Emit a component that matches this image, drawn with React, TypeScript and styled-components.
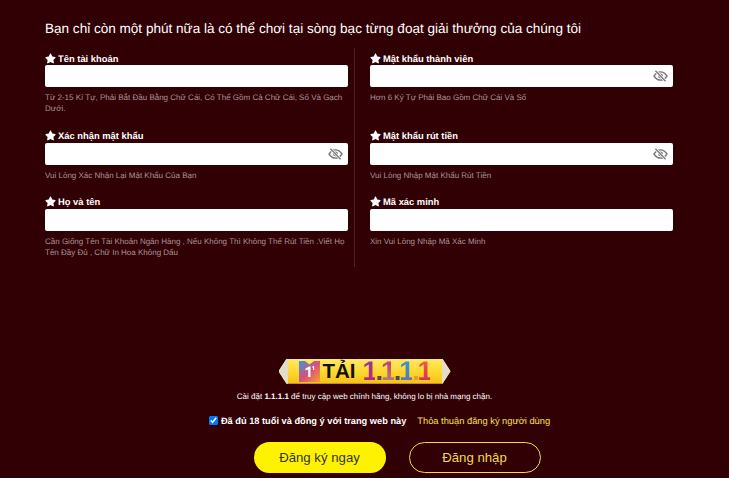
import { createGlobalStyle, styled } from "styled-components";
import { FaStar } from "react-icons/fa";

const GlobalStyle = createGlobalStyle`
  html, body {
    margin: 0;
    padding: 0;
    background: #300005;
    font-family: "Liberation Sans", Arial, sans-serif;
    text-rendering: geometricPrecision;
  }
`;

type FieldData = {
  label: string;
  hint: string;
  secret?: boolean;
};

const leftFields: FieldData[] = [
  {
    label: "Tên tài khoản",
    hint: "Từ 2-15 Kí Tự, Phải Bắt Đầu Bằng Chữ Cái, Có Thể Gồm Cả Chữ Cái, Số Và Gạch Dưới.",
  },
  {
    label: "Xác nhận mật khẩu",
    hint: "Vui Lòng Xác Nhận Lại Mật Khẩu Của Bạn",
    secret: true,
  },
  {
    label: "Họ và tên",
    hint: "Cần Giống Tên Tài Khoản Ngân Hàng , Nếu Không Thì Không Thể Rút Tiền .Viết Họ Tên Đầy Đủ , Chữ In Hoa Không Dấu",
  },
];

const rightFields: FieldData[] = [
  {
    label: "Mật khẩu thành viên",
    hint: "Hơn 6 Ký Tự Phải Bao Gồm Chữ Cái Và Số",
    secret: true,
  },
  {
    label: "Mật khẩu rút tiền",
    hint: "Vui Lòng Nhập Mật Khẩu Rút Tiền",
    secret: true,
  },
  {
    label: "Mã xác minh",
    hint: "Xin Vui Lòng Nhập Mã Xác Minh",
  },
];

const EyeSlash = () => (
  <EyeIcon viewBox="0 0 16 13">
    <path
      d="M1 6.5 C3 3.4 5.4 2 8 2 C10.6 2 13 3.4 15 6.5 C13 9.6 10.6 11 8 11 C5.4 11 3 9.6 1 6.5 Z"
      fill="none"
      stroke="#777"
      strokeWidth="1.5"
    />
    <circle cx="8" cy="6.5" r="2.6" fill="#777" />
    <path d="M2.5 0.8 L13.5 12.2" stroke="#fff" strokeWidth="2.8" />
    <path d="M2.5 0.8 L13.5 12.2" stroke="#777" strokeWidth="1.4" />
  </EyeIcon>
);

const Field = ({ label, hint, secret }: FieldData) => (
  <FieldWrap>
    <Label>
      <FaStar size={11} />
      {label}
    </Label>
    <InputBox>
      <Input type={secret ? "password" : "text"} />
      {secret && <EyeSlash />}
    </InputBox>
    <Hint>{hint}</Hint>
  </FieldWrap>
);

const App = () => {
  return (
    <>
      <GlobalStyle />
      <Page>
        <Title>Bạn chỉ còn một phút nữa là có thể chơi tại sòng bạc từng đoạt giải thưởng của chúng tôi</Title>
        <FormGrid>
          {leftFields.map((f) => (
            <Field key={f.label} {...f} />
          ))}
          <Divider />
          {rightFields.map((f) => (
            <Field key={f.label} {...f} />
          ))}
        </FormGrid>
        <Footer>
          <Banner>
            <BannerLogo viewBox="0 0 21 21">
              <defs>
                <linearGradient id="logoBg" x1="0" y1="0" x2="1" y2="1">
                  <stop offset="0" stopColor="#2f9be0" />
                  <stop offset="0.5" stopColor="#d9507a" />
                  <stop offset="1" stopColor="#f5a030" />
                </linearGradient>
              </defs>
              <path d="M0 0 L6 0 L10.5 3.5 L15 0 L21 0 L21 21 L0 21 Z" fill="url(#logoBg)" />
              <path d="M6.5 7.5 L10 5.5 L11.5 5.5 L11.5 16 L9.2 16 L9.2 8.6 L6.5 9.6 Z" fill="#fff" />
              <path d="M13.8 5 L15.2 5 L15.2 9 L14 9 L14 6.4 L13 6.8 Z" fill="#fff" />
            </BannerLogo>
            <BannerWord>TẢI</BannerWord>
            <BannerNumber>
              <Digit $from="#8f3a9c" $to="#c2286e">1</Digit>
              <Dot>.</Dot>
              <Digit $from="#c0357a" $to="#b08a70">1</Digit>
              <Dot>.</Dot>
              <Digit $from="#30a0c0" $to="#6a6ab8">1</Digit>
              <Dot $color="#e89a30">.</Dot>
              <Digit $from="#f0603a" $to="#d82858">1</Digit>
            </BannerNumber>
          </Banner>
          <Note>
            Cài đặt <b>1.1.1.1</b> để truy cập web chính hãng, không lo bị nhà mạng chặn.
          </Note>
          <AgreeRow>
            <AgreeLabel>
              <AgreeBox type="checkbox" defaultChecked />
              Đã đủ 18 tuổi và đồng ý với trang web này
            </AgreeLabel>
            <AgreeLink>Thỏa thuận đăng ký người dùng</AgreeLink>
          </AgreeRow>
          <ButtonRow>
            <PrimaryButton>Đăng ký ngay</PrimaryButton>
            <OutlineButton>Đăng nhập</OutlineButton>
          </ButtonRow>
        </Footer>
      </Page>
    </>
  );
};

const Page = styled.div`
  width: 729px;
  height: 478px;
  overflow: hidden;
  box-sizing: border-box;
  padding: 20px 0 0 45px;
  background: #300005;
`;

const Title = styled.div`
  color: #fff;
  font-size: 13.55px;
  line-height: 17px;
  white-space: nowrap;
`;

const FormGrid = styled.div`
  display: grid;
  grid-auto-flow: column;
  grid-template-columns: 303px 22px 303px;
  grid-template-rows: auto auto 75px;
  row-gap: 10.8px;
  margin-top: 11px;
`;

const Divider = styled.div`
  grid-row: 1 / span 3;
  width: 1px;
  margin-left: 6px;
  background: #4c2226;
`;

const FieldWrap = styled.div``;

const Label = styled.div`
  display: flex;
  align-items: center;
  gap: 2px;
  height: 14px;
  margin-top: 3px;
  color: #fff;
  font-size: 9.4px;
  font-weight: 700;
`;

const InputBox = styled.div`
  position: relative;
  height: 22px;
`;

const Input = styled.input`
  display: block;
  width: 100%;
  height: 100%;
  box-sizing: border-box;
  padding: 0 8px;
  border: 0;
  border-radius: 2px;
  background: #fff;
`;

const EyeIcon = styled.svg`
  position: absolute;
  top: 5px;
  right: 5px;
  width: 15px;
  height: 12px;
`;

const Hint = styled.div`
  margin-top: 5px;
  color: #ad9497;
  font-size: 8px;
  line-height: 11.4px;
`;

const Footer = styled.div`
  display: flex;
  flex-direction: column;
  align-items: center;
  width: 639px;
  margin-top: 92px;
`;

const Banner = styled.div`
  display: flex;
  align-items: center;
  justify-content: center;
  width: 172px;
  height: 25px;
  background:
    linear-gradient(90deg, #e4dccb 0 9px, transparent 9px calc(100% - 9px), #e4dccb calc(100% - 9px) 100%),
    linear-gradient(180deg, #ffe76a 0%, #ffd92e 50%, #f5bf1a 100%);
  clip-path: polygon(0 50%, 8px 0, calc(100% - 8px) 0, 100% 50%, calc(100% - 8px) 100%, 8px 100%);
`;

const BannerLogo = styled.svg`
  width: 21px;
  height: 21px;
`;

const BannerWord = styled.span`
  margin-left: 3px;
  color: #111;
  font-size: 20.5px;
  font-weight: 700;
  line-height: 25px;
`;

const BannerNumber = styled.span`
  display: flex;
  align-items: baseline;
  margin-left: 7px;
  font-size: 27px;
  font-weight: 700;
  line-height: 25px;
  letter-spacing: -2.1px;
`;

const Digit = styled.span<{ $from: string; $to: string }>`
  background: linear-gradient(180deg, ${(p) => p.$from}, ${(p) => p.$to});
  -webkit-background-clip: text;
  background-clip: text;
  color: transparent;
`;

const Dot = styled.span<{ $color?: string }>`
  color: ${(p) => p.$color ?? "#4a4a4a"};
`;

const Note = styled.div`
  margin-top: 7px;
  color: #fff;
  font-size: 8px;
  line-height: 12px;
`;

const AgreeRow = styled.div`
  display: flex;
  align-items: center;
  gap: 11px;
  margin-top: 13px;
  padding-left: 30px;
`;

const AgreeLabel = styled.label`
  display: flex;
  align-items: center;
  gap: 3px;
  color: #fff;
  font-size: 9.25px;
  font-weight: 700;
`;

const AgreeBox = styled.input`
  width: 9px;
  height: 9px;
  margin: 0;
`;

const AgreeLink = styled.span`
  color: #ffe14a;
  font-size: 9.3px;
`;

const ButtonRow = styled.div`
  display: flex;
  gap: 23px;
  margin-top: 16px;
  padding-left: 65px;
`;

const PrimaryButton = styled.button`
  width: 132px;
  height: 31px;
  border: 0;
  border-radius: 16px;
  background: #fff200;
  color: #333;
  font-family: inherit;
  font-size: 13.2px;
`;

const OutlineButton = styled.button`
  width: 132px;
  height: 31px;
  border: 1px solid #f5d94a;
  border-radius: 16px;
  background: transparent;
  color: #f5d94a;
  font-family: inherit;
  font-size: 13.2px;
`;

export default App;
